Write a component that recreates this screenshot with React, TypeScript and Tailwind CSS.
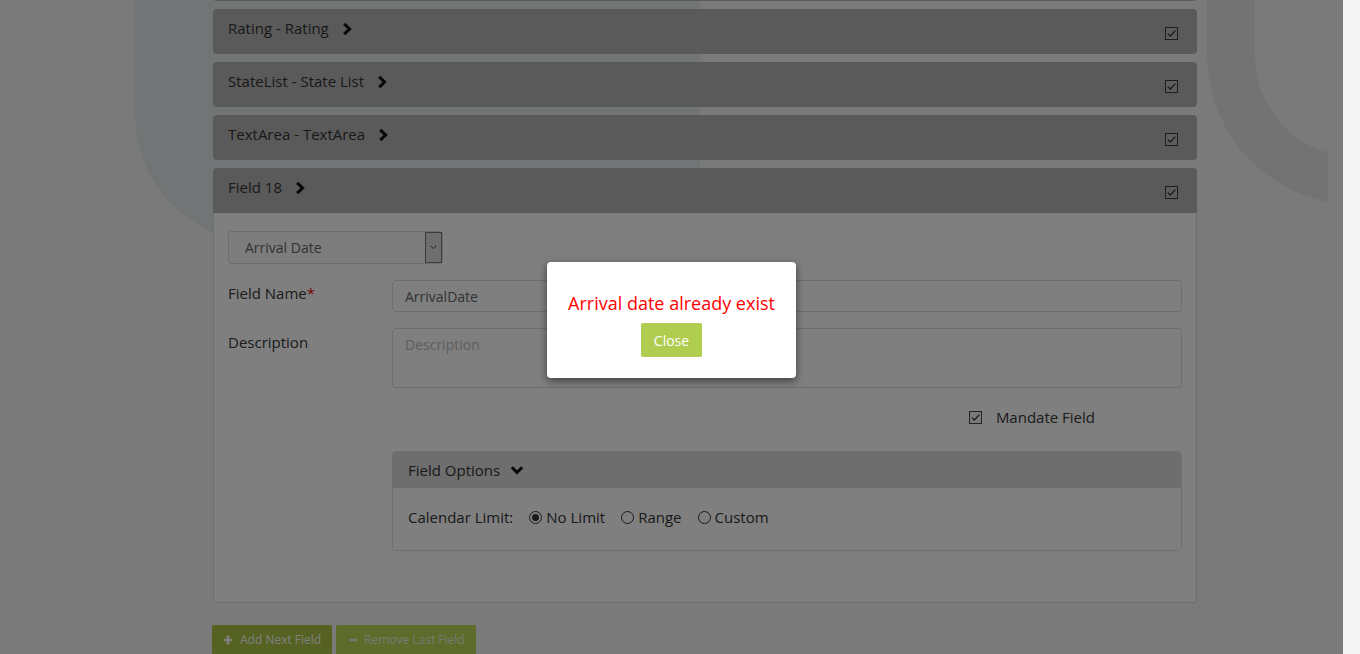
import type { ReactNode } from "react";

function ChevronRight() {
  return (
    <svg viewBox="0 0 10 14" className="ml-[13px] h-[14px] w-[10px]">
      <path d="M2.2 1.8 L7.6 7 L2.2 12.2" fill="none" stroke="#111" strokeWidth="3" strokeLinejoin="miter" />
    </svg>
  );
}

function ChevronDown() {
  return (
    <svg viewBox="0 0 14 10" className="ml-[10px] h-[10px] w-[14px]">
      <path d="M1.8 2.2 L7 7.4 L12.2 2.2" fill="none" stroke="#111" strokeWidth="3" strokeLinejoin="miter" />
    </svg>
  );
}

function CheckBox({ light }: { light?: boolean }) {
  return (
    <span
      className={
        light
          ? "flex h-[13px] w-[13px] items-center justify-center border border-[#444] bg-[#f5f5f5]"
          : "flex h-[13px] w-[13px] items-center justify-center border border-[#3c3c3c] bg-[#bababa]"
      }
    >
      <svg viewBox="0 0 11 11" className="h-[11px] w-[11px]">
        <path d="M1.8 5.6 L4.3 8 L9.4 2.6" fill="none" stroke="#333" strokeWidth="1.3" />
      </svg>
    </span>
  );
}

function Radio({ checked, label }: { checked?: boolean; label: string }) {
  return (
    <label className="flex items-center">
      <span className="flex h-[13px] w-[13px] items-center justify-center rounded-full border border-[#333] bg-white">
        {checked && <span className="h-[7px] w-[7px] rounded-full bg-[#333]" />}
      </span>
      <span className="ml-[4px] text-[15px] text-[#333]">{label}</span>
    </label>
  );
}

function Header({ title, top }: { title: string; top?: boolean }) {
  return (
    <div
      className={
        top
          ? "flex h-[45px] items-start rounded-t-[4px] bg-[#b4b4b4] pl-[15px] pr-[19px]"
          : "mb-2 flex h-[45px] items-start rounded-[4px] bg-[#b4b4b4] pl-[15px] pr-[19px]"
      }
    >
      <div className="mt-[9px] flex h-[21px] items-center">
        <span className="text-[15px] leading-[21px] text-[#333]">{title}</span>
        <ChevronRight />
      </div>
      <span className="ml-auto mt-[18px]">
        <CheckBox />
      </span>
    </div>
  );
}

function Row({ label, children }: { label: ReactNode; children: ReactNode }) {
  return (
    <div className="flex">
      <div className="w-[164px] pt-[3px] text-[15px] leading-[21px] text-[#383838]">{label}</div>
      <div className="flex-1">{children}</div>
    </div>
  );
}

export default function App() {
  return (
    <div className="flex h-[654px] w-[1360px] overflow-hidden font-['Open_Sans','Liberation_Sans',sans-serif]">
      <div className="relative h-full w-[1343px] overflow-hidden bg-[#f5f5f5]">
        {/* watermark shapes */}
        <svg className="absolute inset-0 h-full w-full" viewBox="0 0 1343 654">
          <path d="M135 0 V115 A127 127 0 0 0 262 242 H700 V0 Z" fill="#e3eaea" />
          <path d="M1207 0 V55 A150 150 0 0 0 1328 202.1 V152.8 A102 102 0 0 1 1255 55 V0 Z" fill="#e6e6e6" />
        </svg>

        <div className="relative pl-[213px]">
          <div className="w-[984px]">
            <div className="-mt-[44px] mb-2 h-[45px] rounded-[4px] bg-[#b4b4b4]" />
            <Header title="Rating - Rating" />
            <Header title="StateList - State List" />
            <Header title="TextArea - TextArea" />
            <Header title="Field 18" top />

            <div className="h-[390px] rounded-b-[4px] border border-t-0 border-[#ddd] bg-white px-[14px] pt-[18px]">
              <div className="flex h-[33px] w-[215px] items-center rounded-[3px] border border-[#dadada] bg-[#fafafa]">
                <span className="pl-[16px] text-[14px] text-[#666]">Arrival Date</span>
                <span className="ml-auto flex h-full w-[17px] items-center justify-center border border-[#777] bg-[#dcdcdc]">
                  <svg viewBox="0 0 8 6" className="h-[5px] w-[7px]">
                    <path d="M0.8 1 L4 4.4 L7.2 1" fill="none" stroke="#222" strokeWidth="1" />
                  </svg>
                </span>
              </div>

              <div className="mt-[16px]">
                <Row
                  label={
                    <>
                      Field Name<span className="text-[#ee1111]">*</span>
                    </>
                  }
                >
                  <div className="flex h-[32px] items-center rounded-[3px] border border-[#ddd] bg-white pl-[12px] text-[14px] text-[#666]">
                    ArrivalDate
                  </div>
                </Row>
              </div>

              <div className="mt-[16px]">
                <Row label={<span className="block pt-[1px]">Description</span>}>
                  <div className="h-[60px] rounded-[3px] border border-[#ddd] bg-white pl-[12px] pt-[6px] text-[14px] leading-[20px] text-[#bbb]">
                    Description
                  </div>
                </Row>
              </div>

              <div className="mt-[19px] flex h-[20px] items-center justify-end pr-[87px]">
                <CheckBox light />
                <span className="ml-[14px] text-[15px] text-[#383838]">Mandate Field</span>
              </div>

              <div className="ml-[164px] mt-[24px] rounded-[4px] border border-[#ddd]">
                <div className="flex h-[36px] items-center rounded-t-[4px] bg-[#dcdcdc] pl-[15px]">
                  <span className="text-[15px] text-[#333]">Field Options</span>
                  <ChevronDown />
                </div>
                <div className="flex h-[62px] items-start gap-[16px] bg-white pl-[15px] pt-[19px] text-[15px] leading-[21px] text-[#333]">
                  <span>Calendar Limit:</span>
                  <div className="flex items-center gap-[16px]">
                    <Radio checked label="No Limit" />
                    <Radio label="Range" />
                    <Radio label="Custom" />
                  </div>
                </div>
              </div>
            </div>

            <div className="-ml-px mt-[22px] flex gap-[4px]">
              <button className="flex h-[30px] w-[120px] items-center rounded-[2px] bg-[#aac444] pl-[11px] text-[12px] text-white">
                <svg viewBox="0 0 10 10" className="h-[10px] w-[10px]">
                  <path d="M5 0.5 V9.5 M0.5 5 H9.5" stroke="#fff" strokeWidth="2.6" />
                </svg>
                <span className="ml-[7px]">Add Next Field</span>
              </button>
              <button className="flex h-[30px] w-[140px] items-center rounded-[2px] bg-[#bcd856] pl-[13px] text-[12px] text-[#eef0e0]">
                <svg viewBox="0 0 10 10" className="h-[10px] w-[9px]">
                  <path d="M0.5 5 H9.5" stroke="#eef0e0" strokeWidth="2.6" />
                </svg>
                <span className="ml-[6px]">Remove Last Field</span>
              </button>
            </div>
          </div>
        </div>

        {/* modal backdrop */}
        <div className="absolute inset-0 bg-black/50" />

        <div className="absolute left-[547px] top-[262px] w-[249px] rounded-[4px] bg-white pb-[21px] pt-[28px] text-center shadow-[0_3px_9px_rgba(0,0,0,0.5)]">
          <p className="text-[18px] leading-[27px] text-[#f00]">Arrival date already exist</p>
          <button className="mt-[6px] h-[34px] w-[61px] rounded-[2px] bg-[#b1cd4f] text-[14px] text-white">Close</button>
        </div>
      </div>
      <div className="h-full w-[17px] bg-[#f5f5f5]" />
    </div>
  );
}
